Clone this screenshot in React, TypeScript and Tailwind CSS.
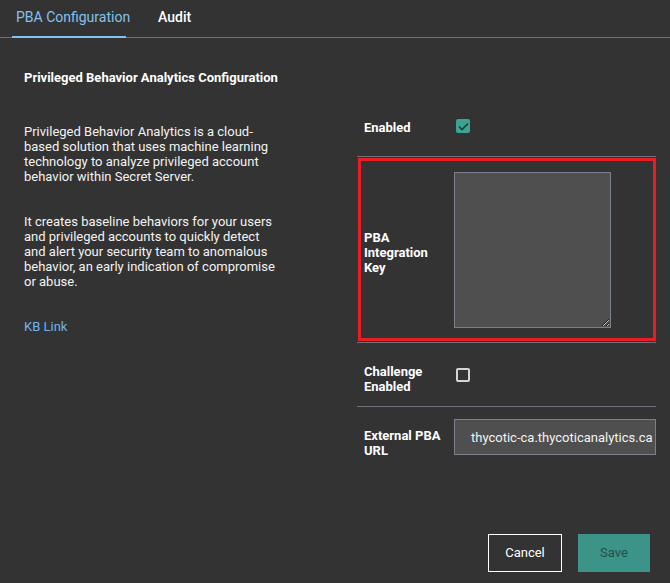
import React from "react";

export default function App() {
  return (
    <div
      className="w-[670px] h-[583px] bg-[#333333] text-[#f2f2f2] overflow-hidden"
      style={{ fontFamily: "Roboto, 'Liberation Sans', sans-serif" }}
    >
      {/* Tabs */}
      <div className="flex items-end h-[38px] border-b border-[#6c727c] pl-[12px]">
        <div className="h-[37px] w-[114px] flex items-center pl-[4px] pb-[2px] border-b-2 border-[#85c1f0] text-[14px] text-[#85c1f0] whitespace-nowrap -mb-px">
          PBA Configuration
        </div>
        <div className="h-[37px] flex items-center pl-[32px] pb-[2px] text-[14px] font-medium text-white whitespace-nowrap">
          Audit
        </div>
      </div>

      {/* Title */}
      <div className="pt-[32px] pl-[24px] text-[13px] leading-[15px] font-bold text-white">
        Privileged Behavior Analytics Configuration
      </div>

      {/* Columns */}
      <div className="flex mt-[19px]">
        <div className="w-[357px] pl-[24px] pt-[20px] text-[13px] leading-[15px]">
          <div className="w-[258px]">
            <p className="mb-[30px]">
              Privileged Behavior Analytics is a cloud-based solution that uses machine learning technology to analyze privileged account behavior within Secret Server.
            </p>
            <p className="mb-[30px]">
              It creates baseline behaviors for your users and privileged accounts to quickly detect and alert your security team to anomalous behavior, an early indication of compromise or abuse.
            </p>
            <a className="text-[#6fb4ee]">KB Link</a>
          </div>
        </div>

        <div className="w-[299px] text-[13px] leading-[15px] font-bold text-white">
          {/* Enabled */}
          <div className="h-[53px] border-b border-[#6c727c] flex items-start pt-[15px] pl-[7px]">
            <div className="w-[82px] pt-[1px]">Enabled</div>
            <div className="ml-[10px] w-[14px] h-[14px] rounded-[2px] bg-[#3aa394] flex items-center justify-center">
              <svg width="11" height="9" viewBox="0 0 11 9" fill="none">
                <path d="M1 4.5L4 7.5L10 1.5" stroke="#1f3d39" strokeWidth="1.6" />
              </svg>
            </div>
          </div>

          {/* PBA Integration Key */}
          <div className="h-[186px] border-b border-[#6c727c] pt-[1px] pl-[1px]">
            <div className="h-[183px] border-[3px] border-[#ea1c24] flex items-center pl-[3px]">
              <div className="w-[82px] pt-[5px]">
                PBA
                <br />
                Integration
                <br />
                Key
              </div>
              <textarea className="ml-[8px] w-[157px] h-[156px] bg-[#4f4f4f] border border-[#7b818c] outline-none resize" />
            </div>
          </div>

          {/* Challenge Enabled */}
          <div className="h-[64px] border-b border-[#6c727c] flex items-center pl-[7px]">
            <div className="w-[82px] leading-[15px] pt-[8px]">
              Challenge
              <br />
              Enabled
            </div>
            <div className="ml-[10px] w-[14px] h-[14px] rounded-[2px] border-2 border-[#d4d4d4]" />
          </div>

          {/* External PBA URL */}
          <div className="h-[63px] flex items-start pt-[12px] pl-[7px]">
            <div className="w-[82px] pt-[9px]">
              External PBA
              <br />
              URL
            </div>
            <div className="ml-[8px] w-[202px] h-[36px] bg-[#4f4f4f] border border-[#7b818c] flex items-center pl-[16px] overflow-hidden whitespace-nowrap font-normal text-[13px] text-[#f2f2f2]">
              thycotic-ca.thycoticanalytics.ca
            </div>
          </div>
        </div>
      </div>

      {/* Buttons */}
      <div className="flex justify-end gap-[16px] pr-[20px] mt-[64px]">
        <button className="w-[74px] h-[38px] border border-white text-[13px] text-white bg-transparent">
          Cancel
        </button>
        <button className="w-[72px] h-[38px] bg-[#3c9488] text-[13px] text-[#234f49]">
          Save
        </button>
      </div>
    </div>
  );
}
